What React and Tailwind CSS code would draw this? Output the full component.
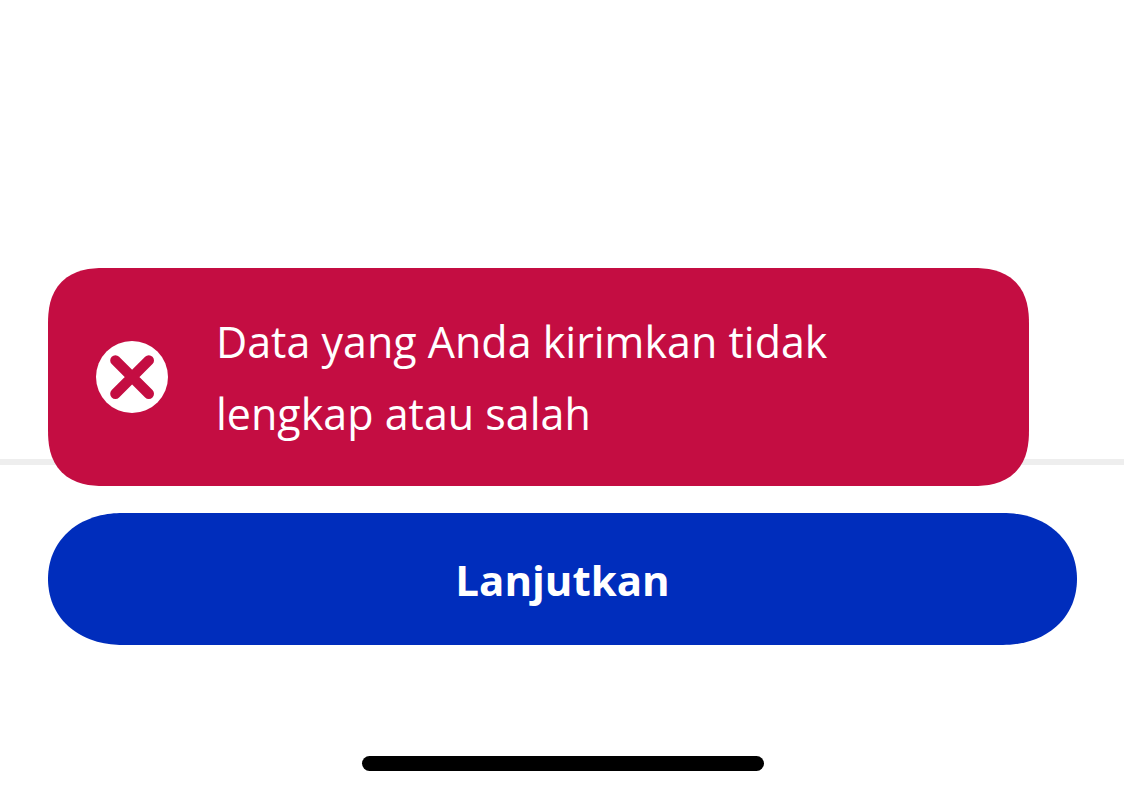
function ErrorIcon() {
  return (
    <svg viewBox="0 0 72 72" className="size-[72px] shrink-0" aria-hidden="true">
      <circle cx="36" cy="36" r="36" fill="#fff" />
      <path d="M19.4 19.4L52.8 52.8M52.8 19.4L19.4 52.8" stroke="#c40d42" strokeWidth="10.4" strokeLinecap="round" />
    </svg>
  );
}

function Toast({ children }) {
  return (
    <div
      role="alert"
      className="absolute bottom-[308px] left-12 right-[95px] flex items-center gap-12 rounded-[56px] bg-[#c40d42] px-12 py-9 [corner-shape:superellipse(1.3)]"
    >
      <ErrorIcon />
      <p className="max-w-[660px] pt-[2px] text-[43px] leading-[72px] text-white">{children}</p>
    </div>
  );
}

export default function App() {
  return (
    <div className="flex min-h-screen flex-col bg-white font-['Open_Sans',sans-serif]">
      <main className="flex-1" />
      <footer className="relative flex flex-col border-t-6 border-[#eeeeee] pr-[47px] pl-12 pt-12 pb-[23px]">
        <Toast>Data yang Anda kirimkan tidak lengkap atau salah</Toast>
        <button
          type="button"
          className="h-[132px] rounded-[74px/66px] bg-[#002dbc] text-[42px] font-bold text-white [corner-shape:superellipse(1.08)]"
        >
          Lanjutkan
        </button>
        <div className="mt-[111px] h-[15px] w-[402px] self-center rounded-full bg-black" />
      </footer>
    </div>
  );
}
